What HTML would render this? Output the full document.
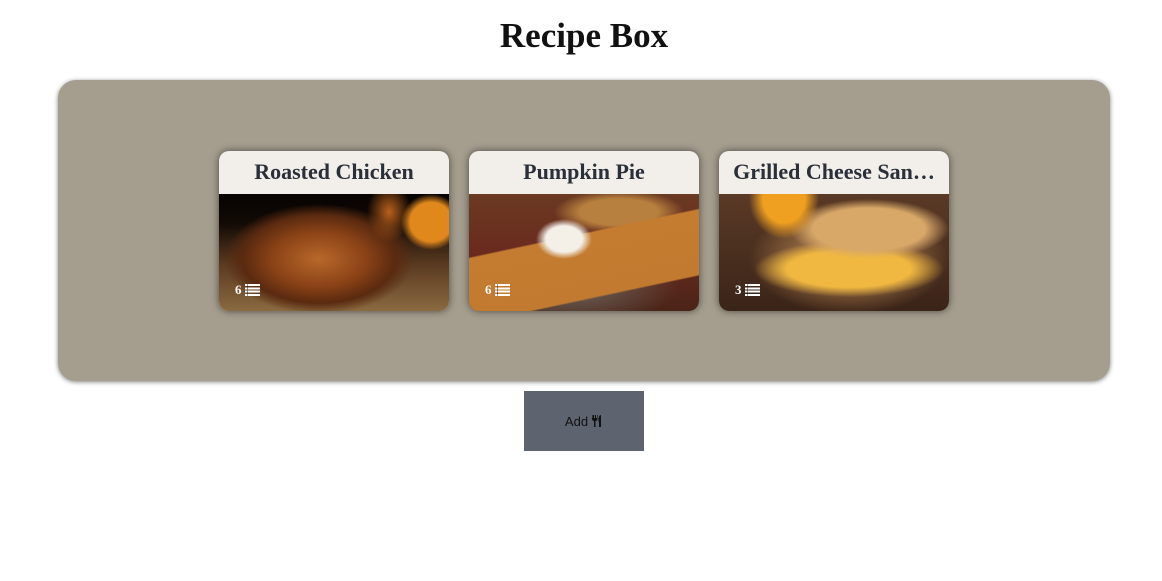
<!DOCTYPE html>
<html><head><meta charset="utf-8"><style>
*{box-sizing:border-box;margin:0;padding:0}
body{width:1162px;height:581px;background:#fff;font-family:"Liberation Serif",serif;position:relative;overflow:hidden}
h1{position:absolute;left:0;width:1168px;top:16px;text-align:center;font-size:35px;font-weight:bold;color:#111}
.panel{position:absolute;left:58px;top:80px;width:1052px;height:301px;background:#a59e8e;border-radius:18px;box-shadow:0 1px 5px rgba(0,0,0,.5)}
.card{position:absolute;top:151px;width:230px;height:160px;border-radius:10px;overflow:hidden;box-shadow:0 0 8px rgba(0,0,0,.55);background:#f2efea}
.card .t{height:43px;line-height:42px;text-align:center;font-weight:bold;font-size:22px;color:#2a2f3a;white-space:nowrap;overflow:hidden;padding:0 8px}
.card .img{position:absolute;top:43px;left:0;width:230px;height:117px}
.cnt{position:absolute;left:16px;bottom:13px;color:#fff;font-weight:bold;font-size:13px;display:flex;align-items:center;gap:3px}
.ic{display:inline-block;width:15px;height:12px;background:repeating-linear-gradient(#fff 0 2px,transparent 2px 3.3px);position:relative}
.ic:before{content:"";position:absolute;left:2px;top:0;width:1px;height:12px;background:rgba(0,0,0,.4)}
.btn{position:absolute;left:524px;top:391px;width:120px;height:60px;background:#5d6470;font-family:"Liberation Sans",sans-serif;font-size:13px;color:#111;display:flex;align-items:center;justify-content:center;gap:3px}
</style></head><body>
<h1>Recipe Box</h1>
<div class="panel"></div>
<div class="card" style="left:219px"><div class="t">Roasted Chicken</div>
<div class="img" style="background:radial-gradient(ellipse 30px 28px at 212px 28px,#e0881c 70%,transparent),radial-gradient(ellipse 22px 30px at 170px 18px,#b8601c,transparent),radial-gradient(ellipse 95px 55px at 100px 65px,#b8682a 0%,#8a4216 50%,#5a2a10 80%,transparent 100%),linear-gradient(#060302 0,#120a05 25%,#5a3a20 60%,#8a6a40 100%)"></div>
<div class="cnt">6 <span class="ic"></span></div></div>
<div class="card" style="left:469px"><div class="t">Pumpkin Pie</div>
<div class="img" style="background:radial-gradient(ellipse 28px 20px at 95px 45px,#f4f0e8 65%,transparent),linear-gradient(168deg,transparent 38%,#c47c30 39%,#c27a30 78%,transparent 79%),radial-gradient(ellipse 110px 45px at 100px 90px,#6e6a60,transparent),radial-gradient(ellipse 65px 22px at 150px 18px,#b8803e 60%,transparent),linear-gradient(#6a3a22,#6a2a1e 50%,#4a2418)"></div>
<div class="cnt">6 <span class="ic"></span></div></div>
<div class="card" style="left:719px"><div class="t">Grilled Cheese San…</div>
<div class="img" style="background:radial-gradient(ellipse 35px 40px at 65px 5px,#f0a020 60%,transparent),radial-gradient(ellipse 80px 30px at 150px 35px,#d8a868 70%,transparent),radial-gradient(ellipse 95px 28px at 130px 75px,#f0b840 65%,transparent),radial-gradient(ellipse 100px 55px at 130px 65px,#d8a060,transparent),linear-gradient(#5a3a26,#3a2418)"></div>
<div class="cnt">3 <span class="ic"></span></div></div>
<div class="btn">Add <svg width="12" height="12" viewBox="0 0 12 12"><path d="M1 0v4c0 1 1 2 2 2v6h1.5V6c1 0 2-1 2-2V0H6v3H5V0H4v3H3V0H2v3H1.6V0z M8 12h2V0C8.5 0 7.5 2 7.5 5V7H8z" fill="#111"/></svg></div>
</body></html>
